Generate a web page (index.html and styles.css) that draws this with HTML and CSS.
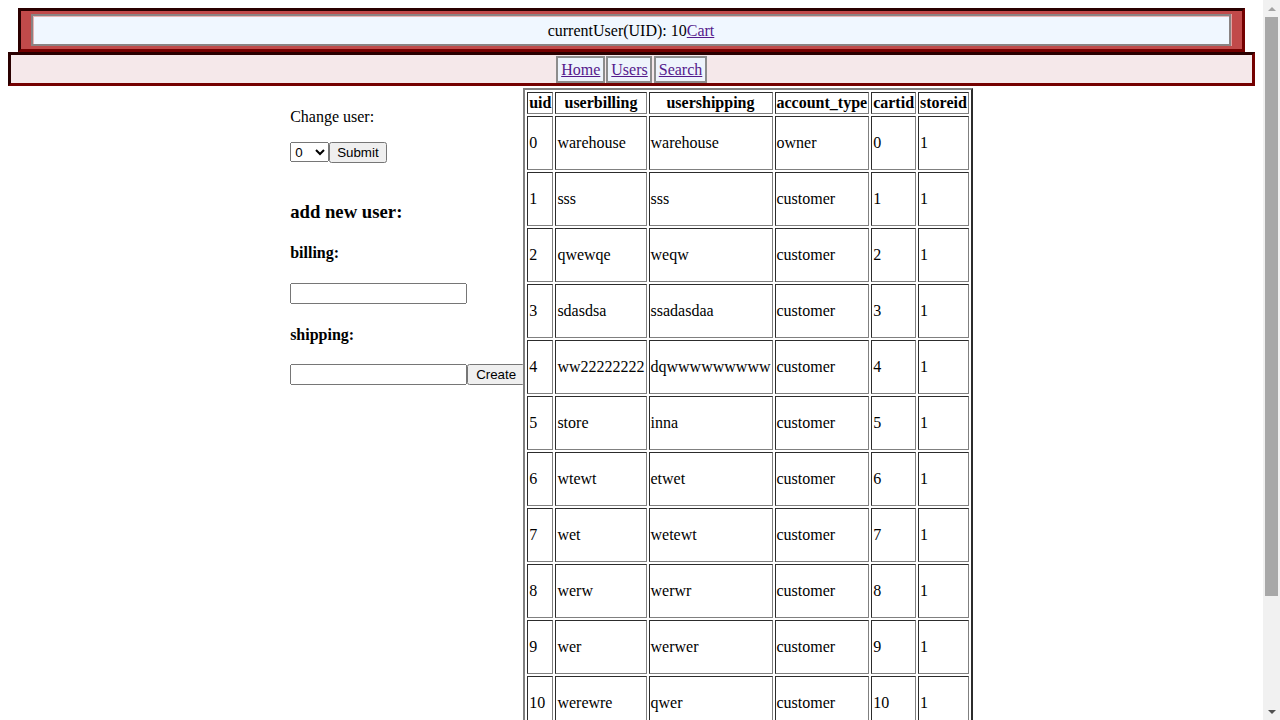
FILE: index.html
```html
<!DOCTYPE html>
<html>
<head>
<meta charset="utf-8">
<title>Users</title>
<link rel="stylesheet" href="styles.css">
</head>
<body>
<div class="topbar">
  <div class="userbar">currentUser(UID): 10<a href="#" class="link">Cart</a></div>
</div>
<nav class="navbar">
  <a href="#" class="navlink">Home</a>
  <a href="#" class="navlink">Users</a>
  <a href="#" class="navlink">Search</a>
</nav>
<div class="main">
  <div class="side">
    <p class="label">Change user:</p>
    <div class="row">
      <select class="ctl-select"><option>0</option><option>1</option></select><button class="ctl-btn">Submit</button>
    </div>
    <h3 class="title">add new user:</h3>
    <h4 class="field">billing:</h4>
    <div class="row row-billing"><input class="ctl-input" type="text"></div>
    <h4 class="field field-shipping">shipping:</h4>
    <div class="row"><input class="ctl-input" type="text"><button class="ctl-btn ctl-create">Create</button></div>
  </div>
  <table class="users">
    <tr><th>uid</th><th>userbilling</th><th>usershipping</th><th>account_type</th><th>cartid</th><th>storeid</th></tr>
    <tr><td>0</td><td>warehouse</td><td>warehouse</td><td>owner</td><td>0</td><td>1</td></tr>
    <tr><td>1</td><td>sss</td><td>sss</td><td>customer</td><td>1</td><td>1</td></tr>
    <tr><td>2</td><td>qwewqe</td><td>weqw</td><td>customer</td><td>2</td><td>1</td></tr>
    <tr><td>3</td><td>sdasdsa</td><td>ssadasdaa</td><td>customer</td><td>3</td><td>1</td></tr>
    <tr><td>4</td><td>ww22222222</td><td>dqwwwwwwwww</td><td>customer</td><td>4</td><td>1</td></tr>
    <tr><td>5</td><td>store</td><td>inna</td><td>customer</td><td>5</td><td>1</td></tr>
    <tr><td>6</td><td>wtewt</td><td>etwet</td><td>customer</td><td>6</td><td>1</td></tr>
    <tr><td>7</td><td>wet</td><td>wetewt</td><td>customer</td><td>7</td><td>1</td></tr>
    <tr><td>8</td><td>werw</td><td>werwr</td><td>customer</td><td>8</td><td>1</td></tr>
    <tr><td>9</td><td>wer</td><td>werwer</td><td>customer</td><td>9</td><td>1</td></tr>
    <tr><td>10</td><td>werewre</td><td>qwer</td><td>customer</td><td>10</td><td>1</td></tr>
    <tr><td>11</td><td>test</td><td>test</td><td>customer</td><td>11</td><td>1</td></tr>
    <tr><td>12</td><td>qwe</td><td>qwe</td><td>customer</td><td>12</td><td>1</td></tr>
  </table>
</div>
<div class="scrollbar" aria-hidden="true">
  <div class="sb-btn"><span class="sb-arrow-up"></span></div>
  <div class="sb-thumb"></div>
  <div class="sb-rest"></div>
  <div class="sb-btn"><span class="sb-arrow-down"></span></div>
</div>
</body>
</html>
```

FILE: styles.css
```css
html {
  background: #ffffff;
}
body {
  margin: 8px 25px 8px 8px;
  font-family: "Liberation Serif", "Times New Roman", serif;
  font-size: 16px;
  color: #000000;
}
a {
  color: #551a8b;
}

/* top bar */
.topbar {
  margin: 0 10px;
  border: 3px solid;
  border-color: #2a0000 #740000 #740000 #2a0000;
  background: #c14a4a;
  padding: 3px 11px 3px 10px;
}
.userbar {
  background: #f0f7ff;
  border: 2px solid #8a8383;
  box-shadow: inset 1px 1px 0 #e8b4b4, 1px 0 0 #e3a3a3;
  padding: 6px 0 4px;
  line-height: 18px;
  text-align: center;
}

/* nav bar */
.navbar {
  display: flex;
  justify-content: center;
  gap: 1.5px;
  border: 3px solid;
  border-color: #2a0000 #740000 #740000 #2a0000;
  background: #f5e8ea;
  padding: 1px 0 0;
  box-sizing: border-box;
  height: 34px;
}
.navlink {
  display: block;
  border: 2px solid #8c8c8c;
  background: #eef4fc;
  padding: 2.5px 2.5px 2.5px 3px;
  line-height: 18px;
}

/* main area */
.main {
  display: flex;
  justify-content: center;
  align-items: flex-start;
  margin-top: 2px;
}
.side {
  width: 233px;
  white-space: nowrap;
}
.label {
  margin: 20px 0 16px;
  line-height: 18px;
}
.row {
  display: flex;
  align-items: flex-start;
}
.row-billing {
  padding-bottom: 1px;
}
.title {
  font-size: 18.72px;
  font-weight: bold;
  margin: 38px 0 18px;
}
.field {
  font-size: 16px;
  font-weight: bold;
  margin: 21px 0 21px;
}
.field-shipping {
  margin-bottom: 20px;
}
.ctl-select,
.ctl-btn,
.ctl-input {
  font-family: "Liberation Sans", Arial, sans-serif;
  font-size: 13.33px;
}
.ctl-select {
  width: 39px;
  height: 20px;
  box-sizing: border-box;
  margin: 0;
}
.ctl-btn {
  margin: 0;
  height: 21px;
  padding: 1px 6px;
}
.ctl-create {
  padding: 1px 7px;
}
.ctl-input {
  width: 177px;
  height: 21px;
  box-sizing: border-box;
  margin: 0;
}

/* table */
.users {
  border: 2px outset #808080;
  border-spacing: 2px;
  font-size: 16px;
}
.users th,
.users td {
  border: 1px inset #808080;
  padding: 1px;
  line-height: 18px;
}
.users th {
  font-weight: bold;
  text-align: center;
}
.users td {
  height: 50px;
  text-align: left;
  vertical-align: middle;
}

/* window scrollbar drawn over the right edge */
.scrollbar {
  position: fixed;
  top: 0;
  right: 0;
  width: 17px;
  height: 100vh;
  background: #f1f1f1;
  display: flex;
  flex-direction: column;
}
.sb-btn {
  height: 17px;
  flex: none;
  display: flex;
  align-items: center;
  justify-content: center;
}
.sb-arrow-up {
  width: 0;
  height: 0;
  border-left: 4px solid transparent;
  border-right: 4px solid transparent;
  border-bottom: 4px solid #a3a3a3;
}
.sb-arrow-down {
  width: 0;
  height: 0;
  border-left: 4px solid transparent;
  border-right: 4px solid transparent;
  border-top: 4px solid #505050;
}
.sb-thumb {
  flex: none;
  height: 579px;
  margin: 0 2px;
  background: #a8a8a8;
}
.sb-rest {
  flex: 1;
}
```
